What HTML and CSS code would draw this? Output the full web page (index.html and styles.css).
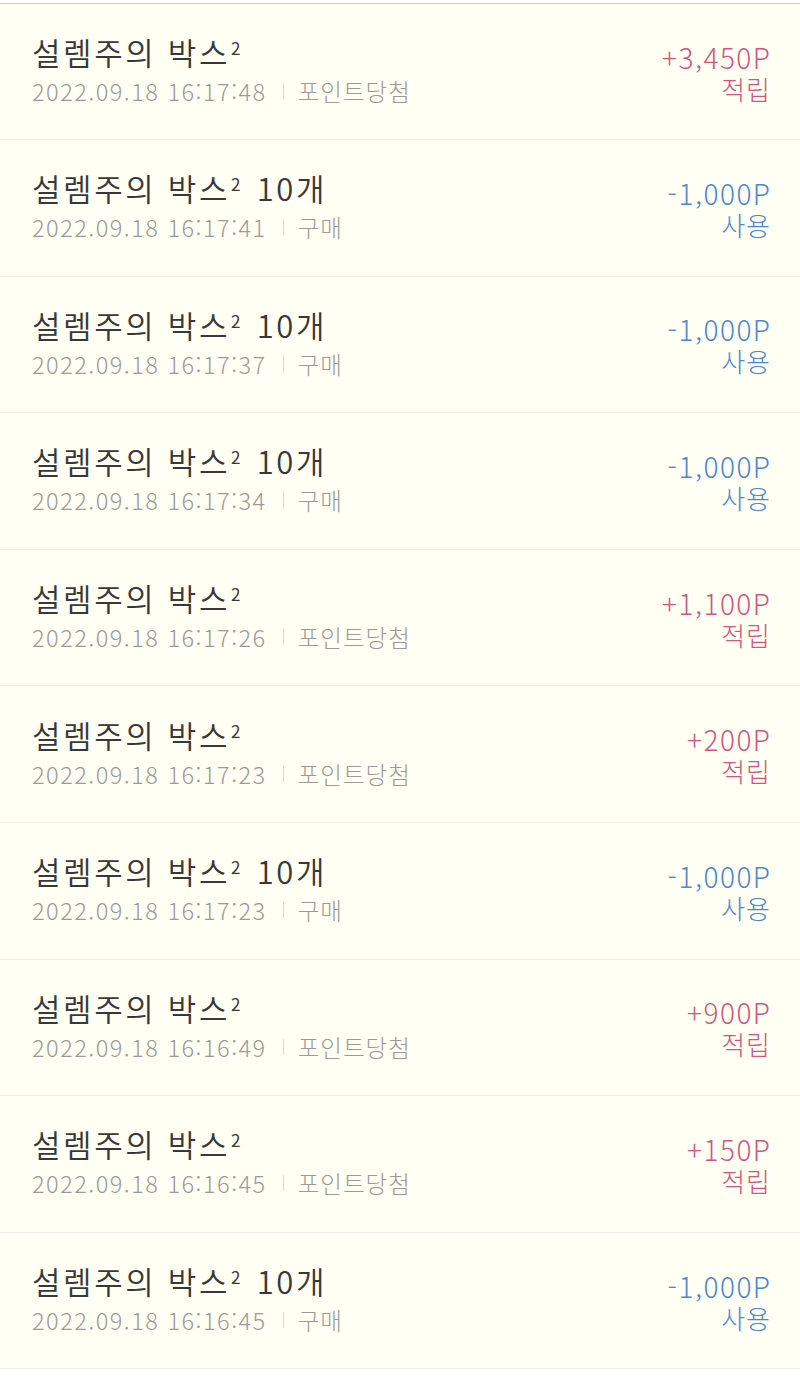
FILE: index.html
```html
<!DOCTYPE html>
<html lang="ko">
<head>
<meta charset="utf-8">
<link rel="stylesheet" href="styles.css">
</head>
<body>
<div class="topbar"></div>
<ul class="list">
  <li class="row"><div class="info"><div class="title">설렘주의 박스<sup>2</sup></div><div class="meta"><span class="date">2022.09.18 16:17:48</span><span class="sep"></span><span class="kind">포인트당첨</span></div></div><div class="amount plus"><div class="pt">+3,450P</div><div class="lbl">적립</div></div></li>
  <li class="row"><div class="info"><div class="title">설렘주의 박스<sup>2</sup> 10개</div><div class="meta"><span class="date">2022.09.18 16:17:41</span><span class="sep"></span><span class="kind">구매</span></div></div><div class="amount minus"><div class="pt">-1,000P</div><div class="lbl">사용</div></div></li>
  <li class="row"><div class="info"><div class="title">설렘주의 박스<sup>2</sup> 10개</div><div class="meta"><span class="date">2022.09.18 16:17:37</span><span class="sep"></span><span class="kind">구매</span></div></div><div class="amount minus"><div class="pt">-1,000P</div><div class="lbl">사용</div></div></li>
  <li class="row"><div class="info"><div class="title">설렘주의 박스<sup>2</sup> 10개</div><div class="meta"><span class="date">2022.09.18 16:17:34</span><span class="sep"></span><span class="kind">구매</span></div></div><div class="amount minus"><div class="pt">-1,000P</div><div class="lbl">사용</div></div></li>
  <li class="row"><div class="info"><div class="title">설렘주의 박스<sup>2</sup></div><div class="meta"><span class="date">2022.09.18 16:17:26</span><span class="sep"></span><span class="kind">포인트당첨</span></div></div><div class="amount plus"><div class="pt">+1,100P</div><div class="lbl">적립</div></div></li>
  <li class="row"><div class="info"><div class="title">설렘주의 박스<sup>2</sup></div><div class="meta"><span class="date">2022.09.18 16:17:23</span><span class="sep"></span><span class="kind">포인트당첨</span></div></div><div class="amount plus"><div class="pt">+200P</div><div class="lbl">적립</div></div></li>
  <li class="row"><div class="info"><div class="title">설렘주의 박스<sup>2</sup> 10개</div><div class="meta"><span class="date">2022.09.18 16:17:23</span><span class="sep"></span><span class="kind">구매</span></div></div><div class="amount minus"><div class="pt">-1,000P</div><div class="lbl">사용</div></div></li>
  <li class="row"><div class="info"><div class="title">설렘주의 박스<sup>2</sup></div><div class="meta"><span class="date">2022.09.18 16:16:49</span><span class="sep"></span><span class="kind">포인트당첨</span></div></div><div class="amount plus"><div class="pt">+900P</div><div class="lbl">적립</div></div></li>
  <li class="row"><div class="info"><div class="title">설렘주의 박스<sup>2</sup></div><div class="meta"><span class="date">2022.09.18 16:16:45</span><span class="sep"></span><span class="kind">포인트당첨</span></div></div><div class="amount plus"><div class="pt">+150P</div><div class="lbl">적립</div></div></li>
  <li class="row"><div class="info"><div class="title">설렘주의 박스<sup>2</sup> 10개</div><div class="meta"><span class="date">2022.09.18 16:16:45</span><span class="sep"></span><span class="kind">구매</span></div></div><div class="amount minus"><div class="pt">-1,000P</div><div class="lbl">사용</div></div></li>
</ul>
</body>
</html>
```

FILE: styles.css
```css
html, body {
  margin: 0;
  padding: 0;
  background: #ffffff;
}
body {
  font-family: "Noto Sans CJK KR", "Noto Sans", sans-serif;
  width: 800px;
}
.topbar {
  height: 3px;
  border-bottom: 1.5px solid #c9c9c6;
  background: #ffffff;
}
.list {
  list-style: none;
  margin: 0;
  padding: 0;
  background: #fffff4;
}
.row {
  box-sizing: border-box;
  height: 136.6px;
  border-bottom: 1px solid #efefe8;
  display: flex;
  align-items: center;
  justify-content: space-between;
  padding: 0 30px 0 32px;
}
.row:first-child {
  height: 136px;
}
.info {
  display: flex;
  flex-direction: column;
  gap: 5px;
  margin-top: -4px;
}
.title {
  font-size: 31px;
  line-height: 38px;
  letter-spacing: 2.6px;
  color: #383838;
  font-weight: 350;
}
.title sup {
  font-size: 17px;
  vertical-align: top;
  position: relative;
  top: -4px;
  margin-left: 1px;
  letter-spacing: 0;
  margin-right: 5px;
  font-weight: 400;
}
.meta {
  display: flex;
  align-items: center;
  font-size: 23.5px;
  line-height: 30px;
  color: #9a9a98;
  font-weight: 300;
}
.date {
  letter-spacing: 1.5px;
}
.kind {
  letter-spacing: 1px;
}
.sep {
  width: 1px;
  height: 16px;
  background: #d8d8d4;
  margin: 0 14px 0 16px;
}
.amount {
  display: flex;
  flex-direction: column;
  align-items: flex-end;
  font-weight: 300;
  margin-top: 0;
}
.pt {
  font-size: 28px;
  line-height: 33px;
  letter-spacing: 1.5px;
  margin-right: -1.5px;
}
.lbl {
  font-size: 26px;
  line-height: 29px;
  letter-spacing: 1px;
  margin-right: -1px;
}
.plus { color: #d2567c; }
.minus { color: #4a87d2; }
```
